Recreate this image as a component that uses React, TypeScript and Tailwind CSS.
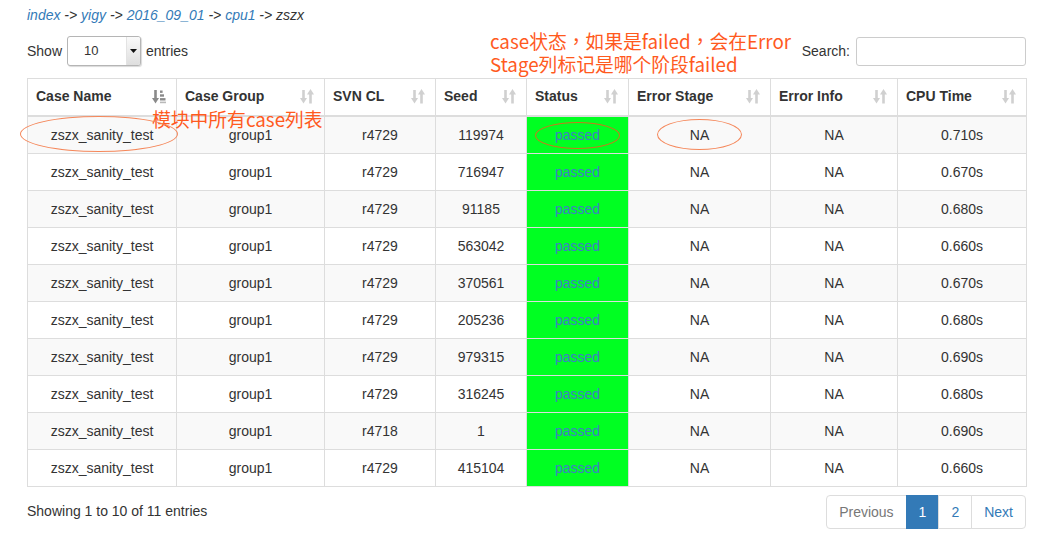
import React from "react"

const rows = [
  ["r4729", "119974", "0.710s"],
  ["r4729", "716947", "0.670s"],
  ["r4729", "91185", "0.680s"],
  ["r4729", "563042", "0.660s"],
  ["r4729", "370561", "0.670s"],
  ["r4729", "205236", "0.680s"],
  ["r4729", "979315", "0.690s"],
  ["r4729", "316245", "0.680s"],
  ["r4718", "1", "0.690s"],
  ["r4729", "415104", "0.660s"],
]

const cols = [
  { name: "Case Name", w: "w-[149px]", sorted: true },
  { name: "Case Group", w: "w-[148px]" },
  { name: "SVN CL", w: "w-[111px]" },
  { name: "Seed", w: "w-[91px]" },
  { name: "Status", w: "w-[102px]" },
  { name: "Error Stage", w: "w-[142px]" },
  { name: "Error Info", w: "w-[127px]" },
  { name: "CPU Time", w: "w-[129px]" },
]

function SortIcon({ sorted }: { sorted?: boolean }) {
  if (sorted) {
    return (
      <svg width="14" height="15" viewBox="0 0 14 15" className="shrink-0">
        <g fill="#8a8a8a">
          <rect x="2.2" y="1" width="2.6" height="9" />
          <polygon points="0,9 7,9 3.5,14.5" />
          <rect x="8" y="1.5" width="2.6" height="2.4" />
          <rect x="8" y="5.3" width="4" height="2.4" />
          <rect x="8" y="9.1" width="5.5" height="2.4" />
          <rect x="8" y="12.6" width="6" height="1.6" opacity="0.6" />
        </g>
      </svg>
    )
  }
  return (
    <svg width="14" height="15" viewBox="0 0 14 15" className="shrink-0">
      <g fill="#d0d0d0">
        <rect x="2.2" y="1" width="2.6" height="9" />
        <polygon points="0,9 7,9 3.5,14.5" />
        <rect x="9.2" y="5" width="2.6" height="9.5" />
        <polygon points="7,5.5 14,5.5 10.5,0" />
      </g>
    </svg>
  )
}

export default function App() {
  return (
    <div className="relative w-[1050px] h-[549px] bg-white pl-[27px] pr-[24px] pt-[5px] font-['Liberation_Sans',Arial,sans-serif] text-[14px] leading-[20px] text-[#333] overflow-hidden">
      <div className="italic">
        <span className="text-[#337ab7]">index</span> -&gt;{" "}
        <span className="text-[#337ab7]">yigy</span> -&gt;{" "}
        <span className="text-[#337ab7]">2016_09_01</span> -&gt;{" "}
        <span className="text-[#337ab7]">cpu1</span> -&gt; zszx
      </div>

      <div className="mt-[11px] flex h-[30px] items-center justify-between">
        <div className="flex items-center gap-[5px]">
          <span>Show</span>
          <div className="flex h-[30px] w-[74px] overflow-hidden rounded-[3px] border border-[#b5b5b5] bg-white shadow-[1px_1px_1px_rgba(0,0,0,0.15)]">
            <span className="flex-1 pl-[16px] text-[13px] leading-[28px]">10</span>
            <span className="flex w-[14px] items-center justify-center border-l border-[#e3e3e3] bg-gradient-to-b from-[#fafafa] to-[#dedede]">
              <svg width="7" height="4" viewBox="0 0 7 4">
                <polygon points="0,0 7,0 3.5,4" fill="#111" />
              </svg>
            </span>
          </div>
          <span>entries</span>
        </div>
        <div className="flex items-center gap-[6px]">
          <span>Search:</span>
          <div className="h-[29px] w-[170px] rounded-[3px] border border-[#ccc] bg-white" />
        </div>
      </div>

      <table className="mt-[12px] w-[999px] table-fixed border-collapse border border-[#ddd]">
        <thead>
          <tr>
            {cols.map((c) => (
              <th
                key={c.name}
                className={`${c.w} border border-b-2 border-[#ddd] px-[8px] pt-[7px] pb-[9px] text-left font-bold`}
              >
                <div className="flex items-center justify-between pr-[2px]">
                  <span>{c.name}</span>
                  <SortIcon sorted={c.sorted} />
                </div>
              </th>
            ))}
          </tr>
        </thead>
        <tbody>
          {rows.map((r, i) => (
            <tr key={i} className={i % 2 === 0 ? "bg-[#f9f9f9]" : "bg-white"}>
              <td className="border border-[#ddd] p-[8px] text-center">zszx_sanity_test</td>
              <td className="border border-[#ddd] p-[8px] text-center">group1</td>
              <td className="border border-[#ddd] p-[8px] text-center">{r[0]}</td>
              <td className="border border-[#ddd] p-[8px] text-center">{r[1]}</td>
              <td className="border border-[#ddd] bg-[#00ff22] p-[8px] text-center text-[#3f7ec4]">passed</td>
              <td className="border border-[#ddd] p-[8px] text-center">NA</td>
              <td className="border border-[#ddd] p-[8px] text-center">NA</td>
              <td className="border border-[#ddd] p-[8px] text-center">{r[2]}</td>
            </tr>
          ))}
        </tbody>
      </table>

      <div className="mt-[8px] flex items-start justify-between">
        <div className="pt-[6px]">Showing 1 to 10 of 11 entries</div>
        <div className="flex">
          <span className="rounded-l-[4px] border border-[#ddd] bg-white px-[12px] py-[6px] text-[#777]">Previous</span>
          <span className="-ml-px border border-[#337ab7] bg-[#337ab7] px-[12px] py-[6px] text-white">1</span>
          <span className="-ml-px border border-[#ddd] bg-white px-[12px] py-[6px] text-[#337ab7]">2</span>
          <span className="-ml-px rounded-r-[4px] border border-[#ddd] bg-white px-[12px] py-[6px] text-[#337ab7]">Next</span>
        </div>
      </div>

      {/* annotations */}
      <div className="absolute left-[490px] top-[29px] font-['Noto_Sans_CJK_TC',sans-serif] text-[18.8px] leading-[23px] text-[#ff5a1e]">
        <div>case状态，如果是failed，会在Error</div>
        <div>Stage列标记是哪个阶段failed</div>
      </div>
      <div className="absolute left-[152px] top-[107px] font-['Noto_Sans_CJK_TC',sans-serif] text-[18.8px] leading-[23px] text-[#ff5a1e]">
        模块中所有case列表
      </div>
      <div className="absolute left-[20px] top-[116px] h-[36px] w-[158px] rounded-[50%] border-[1.5px] border-[#f5875a]" />
      <div className="absolute left-[535px] top-[122px] h-[27px] w-[85px] rounded-[50%] border-[1.5px] border-[#c8781e]" />
      <div className="absolute left-[657px] top-[119px] h-[31px] w-[85px] rounded-[50%] border-[1.5px] border-[#f5875a]" />
    </div>
  )
}
